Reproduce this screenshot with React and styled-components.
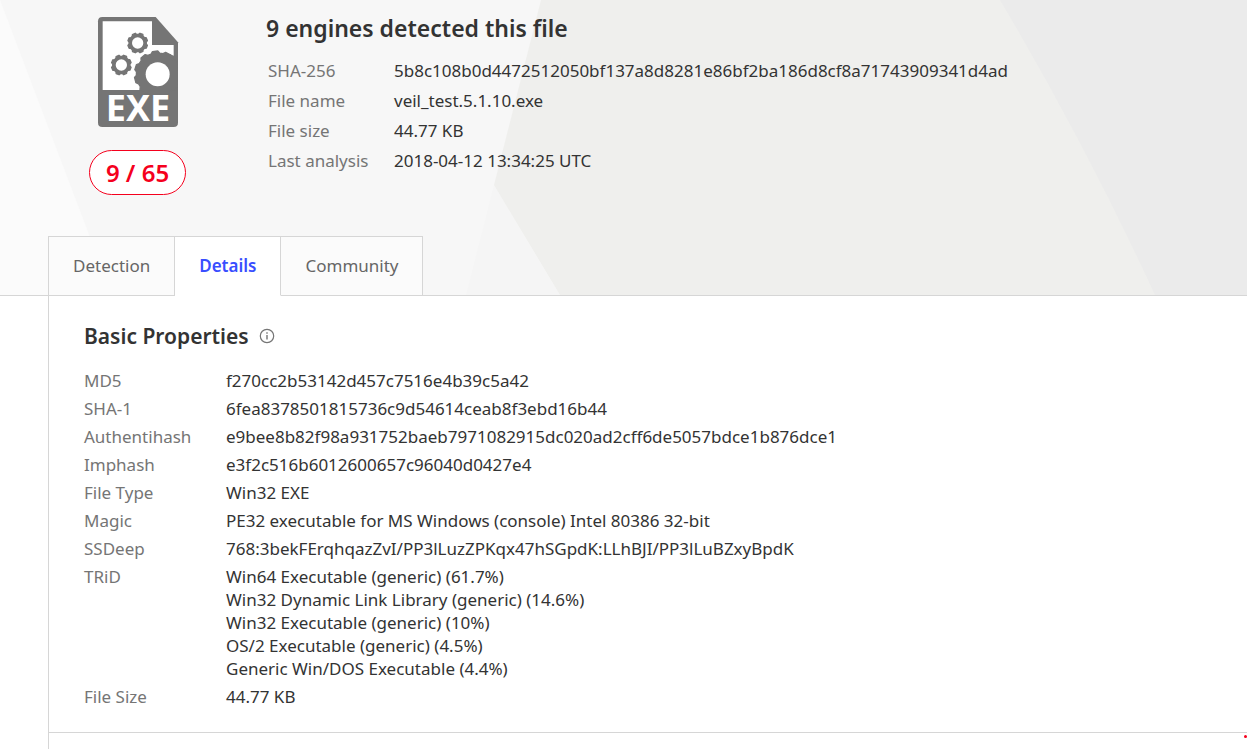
import React from 'react'
import styled, { createGlobalStyle } from 'styled-components'

const GlobalStyle = createGlobalStyle`
    * {
        box-sizing: border-box;
    }

    body {
        margin: 0;
        background: #fff;
        color: #333;
        font-family: 'Noto Sans', 'Open Sans', sans-serif;
        font-size: 17px;
    }
`

const Page = styled.div`
    min-height: 100vh;
    display: flex;
    flex-direction: column;
    overflow-x: hidden;
`

const Hero = styled.header`
    position: relative;
    background: #f7f7f7;
    border-bottom: 1px solid #d6d6d6;
`

const Backdrop = styled.svg`
    position: absolute;
    top: 0;
    left: 0;
    width: 100%;
    height: 100%;
`

const Summary = styled.div`
    position: relative;
    display: flex;
    gap: 80px;
    padding: 12px 48px 41px 89px;
`

const Verdict = styled.div`
    flex: none;
    width: 97px;
    padding-top: 5px;
    display: flex;
    flex-direction: column;
    align-items: center;
    gap: 23px;
`

const FileIcon = styled.svg`
    display: block;
    width: 80px;
    height: 110px;
    overflow: visible;
`

const Ratio = styled.div`
    width: 100%;
    height: 45px;
    display: flex;
    align-items: center;
    justify-content: center;
    border: 1px solid #f5001d;
    border-radius: 23px;
    background: #fff;
    color: #f5001d;
    font-size: 24px;
    font-weight: 600;
`

const Headline = styled.h1`
    margin: 0 0 12px;
    font-size: 23px;
    font-weight: 600;
    line-height: 32px;
`

const Facts = styled.dl`
    margin: 0;
    padding-left: 2px;
    display: grid;
    grid-template-columns: 126px auto;
    line-height: 30px;
`

const Label = styled.dt`
    color: #757575;
`

const Value = styled.dd`
    margin: 0;
`

const Tabs = styled.nav`
    position: relative;
    display: flex;
    width: max-content;
    margin: 0 0 -1px 48px;
    border: 1px solid #d6d6d6;
    border-bottom: none;
`

const Tab = styled.button`
    height: 59px;
    padding: 0 24px 1px;
    border: none;
    border-right: 1px solid #d6d6d6;
    border-bottom: 1px solid ${(props) => (props.$active ? '#fff' : '#d6d6d6')};
    background: ${(props) => (props.$active ? '#fff' : '#fbfbfb')};
    color: ${(props) => (props.$active ? '#394eff' : '#666')};
    font: inherit;
    font-weight: ${(props) => (props.$active ? 600 : 400)};

    &:last-child {
        border-right: none;
    }
`

const Content = styled.main`
    flex: 1;
    margin-left: 48px;
    border-left: 1px solid #d6d6d6;
`

const Section = styled.section`
    padding: 25px 35px 24px;
    border-bottom: 1px solid #d6d6d6;
`

const SectionTitle = styled.h2`
    display: flex;
    align-items: center;
    gap: 10px;
    margin: 0 0 18px;
    font-size: 21px;
    font-weight: 600;
    line-height: 30px;
`

const InfoIcon = styled.svg`
    width: 16px;
    height: 16px;
`

const Properties = styled.dl`
    margin: 0;
    display: grid;
    grid-template-columns: 142px auto;
    row-gap: 5px;
    line-height: 23px;
`

const MarkerDot = styled.span`
    position: absolute;
    right: 0;
    bottom: 11px;
    width: 3px;
    height: 3px;
    border-radius: 50%;
    background: #f5001d;
`

const facts = [
    ['SHA-256', '5b8c108b0d4472512050bf137a8d8281e86bf2ba186d8cf8a71743909341d4ad'],
    ['File name', 'veil_test.5.1.10.exe'],
    ['File size', '44.77 KB'],
    ['Last analysis', '2018-04-12 13:34:25 UTC'],
]

const properties = [
    ['MD5', ['f270cc2b53142d457c7516e4b39c5a42']],
    ['SHA-1', ['6fea8378501815736c9d54614ceab8f3ebd16b44']],
    ['Authentihash', ['e9bee8b82f98a931752baeb7971082915dc020ad2cff6de5057bdce1b876dce1']],
    ['Imphash', ['e3f2c516b6012600657c96040d0427e4']],
    ['File Type', ['Win32 EXE']],
    ['Magic', ['PE32 executable for MS Windows (console) Intel 80386 32-bit']],
    ['SSDeep', ['768:3bekFErqhqazZvI/PP3lLuzZPKqx47hSGpdK:LLhBJI/PP3lLuBZxyBpdK']],
    [
        'TRiD',
        [
            'Win64 Executable (generic) (61.7%)',
            'Win32 Dynamic Link Library (generic) (14.6%)',
            'Win32 Executable (generic) (10%)',
            'OS/2 Executable (generic) (4.5%)',
            'Generic Win/DOS Executable (4.4%)',
        ],
    ],
    ['File Size', ['44.77 KB']],
]

const SHEET = 'M13 0H173L240 76V317Q240 330 227 330H13Q0 330 0 317V13Q0 0 13 0Z'

const gearPath = (cx, cy, outer, inner, teeth, start) => {
    const step = (Math.PI * 2) / teeth
    const points = []
    for (let i = 0; i < teeth; i++) {
        const a = start + i * step
        ;[
            [inner, -0.36],
            [outer, -0.2],
            [outer, 0.2],
            [inner, 0.36],
        ].forEach(([r, k]) => {
            points.push(`${(cx + r * Math.cos(a + k * step)).toFixed(1)} ${(cy + r * Math.sin(a + k * step)).toFixed(1)}`)
        })
    }
    return `M${points.join('L')}Z`
}

const Gear = ({ cx, cy, outer, inner, hole, teeth, start }) => (
    <g>
        <path
            fill="#757575"
            stroke="#757575"
            strokeWidth="4"
            strokeLinejoin="round"
            d={gearPath(cx, cy, outer, inner, teeth, start)}
        />
        <circle cx={cx} cy={cy} r={hole} fill="#fff" />
    </g>
)

const ExeIcon = () => (
    <FileIcon viewBox="0 0 240 330" role="img" aria-label="EXE">
        <clipPath id="sheet">
            <path d={SHEET} />
        </clipPath>
        <path fill="#757575" d={SHEET} />
        <path fill="#fff" d="M14 13H162V84H227V116L216 111L205 117L190 118V219H14Z" />
        <g clipPath="url(#sheet)">
            <Gear cx={179} cy={172} outer={70} inner={64} hole={36} teeth={11} start={-1.68} />
            <Gear cx={119} cy={78} outer={30} inner={26} hole={17} teeth={8} start={0.39} />
            <Gear cx={70} cy={144} outer={30} inner={26} hole={17} teeth={8} start={0.39} />
        </g>
        <text x="120" y="312" textAnchor="middle" fill="#fff" fontSize="108" fontWeight="700">
            EXE
        </text>
    </FileIcon>
)

const App = () => {
    return (
        <Page>
            <GlobalStyle />
            <Hero>
                <Backdrop viewBox="0 0 1247 295" preserveAspectRatio="xMinYMin slice" aria-hidden="true">
                    <path fill="#fbfbfb" d="M0 0L112 295H0Z" />
                    <path fill="#f5f5f5" d="M494 185L466 295H560Z" />
                    <path fill="#efefed" d="M541 0L494 185L560 295H1247V0Z" />
                    <path fill="#ebebeb" d="M1000 0Q1086 145 1155 295H1247V0Z" />
                </Backdrop>
                <Summary>
                    <Verdict>
                        <ExeIcon />
                        <Ratio>9 / 65</Ratio>
                    </Verdict>
                    <div>
                        <Headline>9 engines detected this file</Headline>
                        <Facts>
                            {facts.map(([name, value]) => (
                                <React.Fragment key={name}>
                                    <Label>{name}</Label>
                                    <Value>{value}</Value>
                                </React.Fragment>
                            ))}
                        </Facts>
                    </div>
                </Summary>
                <Tabs>
                    <Tab type="button">Detection</Tab>
                    <Tab type="button" $active>Details</Tab>
                    <Tab type="button">Community</Tab>
                </Tabs>
            </Hero>
            <Content>
                <Section>
                    <SectionTitle>
                        Basic Properties
                        <InfoIcon viewBox="0 0 16 16" fill="none" stroke="#757575" aria-hidden="true">
                            <circle cx="8" cy="8" r="6.7" strokeWidth="1.2" />
                            <path d="M8 7V11.5M8 4.3V5.7" strokeWidth="1.4" />
                        </InfoIcon>
                    </SectionTitle>
                    <Properties>
                        {properties.map(([name, lines]) => (
                            <React.Fragment key={name}>
                                <Label>{name}</Label>
                                <Value>
                                    {lines.map((line) => (
                                        <div key={line}>{line}</div>
                                    ))}
                                </Value>
                            </React.Fragment>
                        ))}
                    </Properties>
                </Section>
            </Content>
            <MarkerDot />
        </Page>
    )
}

export default App
